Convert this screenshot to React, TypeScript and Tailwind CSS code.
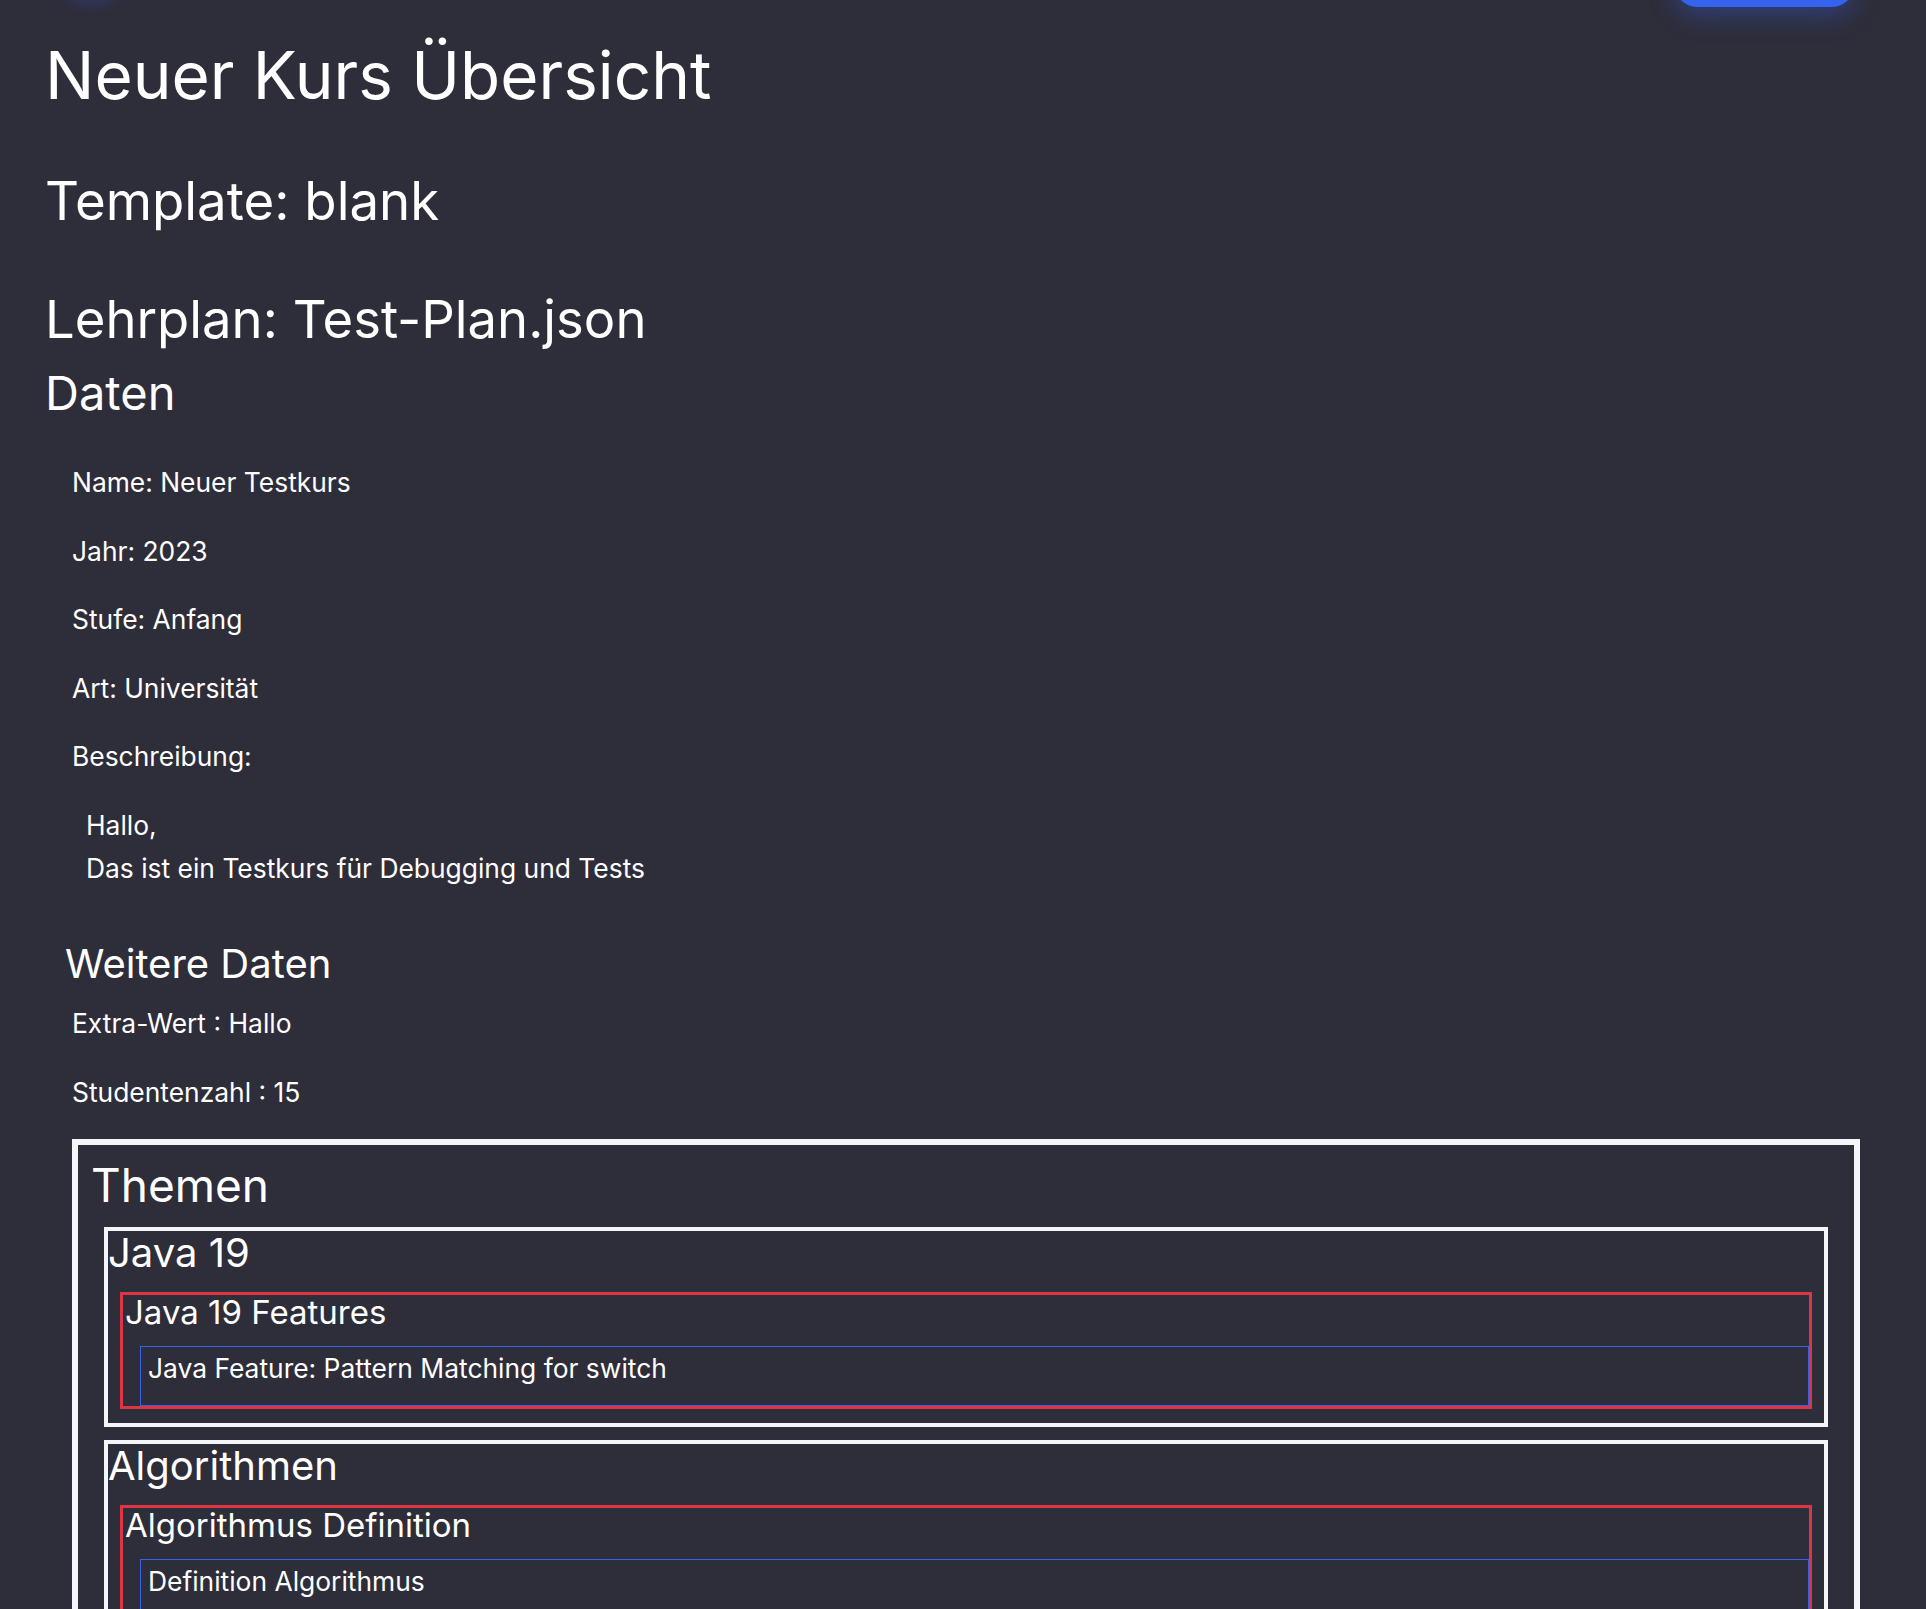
import React from "react";

type Lesson = { title: string; items: string[] };
type Topic = { title: string; lessons: Lesson[] };

const course = {
  name: "Neuer Testkurs",
  year: "2023",
  level: "Anfang",
  kind: "Universität",
  description: "Hallo,\nDas ist ein Testkurs für Debugging und Tests",
  template: "blank",
  plan: "Test-Plan.json",
  extra: [
    { key: "Extra-Wert", value: "Hallo" },
    { key: "Studentenzahl", value: "15" },
  ],
};

const topics: Topic[] = [
  {
    title: "Java 19",
    lessons: [{ title: "Java 19 Features", items: ["Java Feature: Pattern Matching for switch"] }],
  },
  {
    title: "Algorithmen",
    lessons: [{ title: "Algorithmus Definition", items: ["Definition Algorithmus"] }],
  },
];

const TopicBox = ({ topic }: { topic: Topic }) => (
  <div className="border-4 border-[#f4f5f8] pb-[14px]">
    <h4 className="text-[40px] leading-[44px] mb-[17px]">{topic.title}</h4>
    {topic.lessons.map((lesson) => (
      <div key={lesson.title} className="mx-[12px] border-[3px] border-[#dc3545]">
        <h5 className="pl-[2px] text-[33px] leading-[35px] mb-[16px]">{lesson.title}</h5>
        {lesson.items.map((item) => (
          <div
            key={item}
            className="ml-[17px] border border-[#3563e9] pl-[7px] pb-[15px] text-[26.4px] leading-[43px]"
          >
            {item}
          </div>
        ))}
      </div>
    ))}
  </div>
);

export default function App() {
  return (
    <div
      className="relative min-h-screen overflow-hidden bg-[#2e2d3a] pl-[45px] pr-[66px] pt-[40px] pb-[60px] text-white"
      style={{ fontFamily: "Inter, 'Noto Sans', sans-serif" }}
    >
      {/* header bits scrolled out of view */}
      <div className="absolute left-[62px] top-[-44px] h-[44px] w-[60px] rounded-full shadow-[0_4px_14px_rgba(53,99,240,0.22)]" />
      <div className="absolute right-[72px] top-[-40px] h-[47px] w-[179px] rounded-[22px] bg-[#3563f0] shadow-[0_8px_26px_rgba(53,99,240,0.35)]" />

      <h1 className="text-[65.6px] leading-[70px] font-normal">Neuer Kurs Übersicht</h1>
      <h2 className="mt-[62px] text-[52.8px] leading-[58px]">Template: {course.template}</h2>
      <h2 className="mt-[60px] text-[52.6px] leading-[58px]">Lehrplan: {course.plan}</h2>
      <h3 className="mt-[20px] text-[47px] leading-[50px]">Daten</h3>

      <div className="mt-[43px] flex flex-col gap-[25.6px] pl-[27px] text-[26.4px] leading-[43px]">
        <p>Name: {course.name}</p>
        <p>Jahr: {course.year}</p>
        <p>Stufe: {course.level}</p>
        <p>Art: {course.kind}</p>
        <p>Beschreibung:</p>
        <p className="whitespace-pre-line pl-[14px]">{course.description}</p>
      </div>

      <h3 className="mt-[53px] ml-[20px] text-[40px] leading-[42px]">Weitere Daten</h3>

      <div className="mt-[17px] flex flex-col gap-[25.6px] pl-[27px] text-[26.4px] leading-[43px]">
        {course.extra.map((e) => (
          <p key={e.key}>
            {e.key} : {e.value}
          </p>
        ))}
        <div className="border-[6px] border-[#f4f5f8] px-[13px] pt-[14px] pb-[20px]">
          <h3 className="text-[46px] leading-[52px] mb-[16px]">Themen</h3>
          <div className="mx-[13px] flex flex-col gap-[13px]">
            {topics.map((t) => (
              <TopicBox key={t.title} topic={t} />
            ))}
          </div>
        </div>
      </div>
    </div>
  );
}
